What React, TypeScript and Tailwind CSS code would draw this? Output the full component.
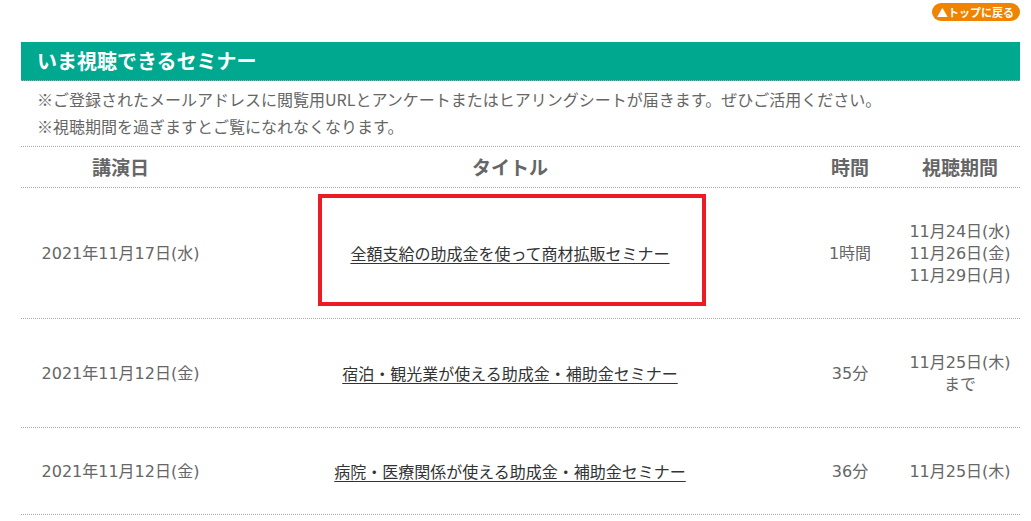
import React from "react";

const font = { fontFamily: '"Noto Sans CJK JP", "Noto Sans", sans-serif' };

type Row = {
  date: string;
  title: string;
  time: string;
  period: string[];
  boxed?: boolean;
};

const rows: Row[] = [
  {
    date: "2021年11月17日(水)",
    title: "全額支給の助成金を使って商材拡販セミナー",
    time: "1時間",
    period: ["11月24日(水)", "11月26日(金)", "11月29日(月)"],
    boxed: true,
  },
  {
    date: "2021年11月12日(金)",
    title: "宿泊・観光業が使える助成金・補助金セミナー",
    time: "35分",
    period: ["11月25日(木)", "まで"],
  },
  {
    date: "2021年11月12日(金)",
    title: "病院・医療関係が使える助成金・補助金セミナー",
    time: "36分",
    period: ["11月25日(木)"],
  },
];

export default function App() {
  return (
    <div className="w-[1031px] h-[521px] bg-white overflow-hidden" style={font}>
      <div className="flex justify-end pr-[11px] pt-[3px] h-[42px]">
        <div className="h-[18px] pl-[5px] pr-[6px] rounded-full bg-[#f08300] text-white text-[11px] font-bold leading-[18px]">
          ▲トップに戻る
        </div>
      </div>
      <div className="ml-[21px] w-[999px]">
        <div className="h-[39px] bg-[#00a88f] border-b border-dotted border-[#aaa] pl-[16px] flex items-center">
          <span className="text-white text-[20px] font-bold">いま視聴できるセミナー</span>
        </div>
        <div className="pl-[16px] pt-[5px] pb-[6px] text-[16px] leading-[27px] text-[#666] border-b border-dotted border-[#aaa]">
          <p>※ご登録されたメールアドレスに閲覧用URLとアンケートまたはヒアリングシートが届きます。ぜひご活用ください。</p>
          <p>※視聴期間を過ぎますとご覧になれなくなります。</p>
        </div>
        <div className="flex h-[41px] border-b border-dotted border-[#aaa] text-[19px] font-bold text-[#666] items-center">
          <div className="w-[199px] text-center">講演日</div>
          <div className="w-[580px] text-center">タイトル</div>
          <div className="w-[100px] text-center">時間</div>
          <div className="w-[120px] text-center">視聴期間</div>
        </div>
        {rows.map((r, i) => (
          <div
            key={i}
            className="flex items-center py-[32px] border-b border-dotted border-[#aaa] text-[16px] leading-[22px] text-[#666]"
          >
            <div className="w-[199px] text-center relative top-[1px] font-['DejaVu_Sans','Noto_Sans_CJK_JP',sans-serif]">{r.date}</div>
            <div className="w-[580px] text-center relative">
              <a href="#" className="underline text-[#333] underline-offset-[3px]">
                {r.title}
              </a>
              {r.boxed && (
                <div className="absolute left-[98px] top-[-48px] w-[388px] h-[112px] border-[4px] border-[#ed1c24]" />
              )}
            </div>
            <div className="w-[100px] text-center relative top-[1px] font-['DejaVu_Sans','Noto_Sans_CJK_JP',sans-serif]">{r.time}</div>
            <div className="w-[120px] text-center relative top-[1px] font-['DejaVu_Sans','Noto_Sans_CJK_JP',sans-serif]">
              {r.period.map((p, j) => (
                <div key={j}>{p}</div>
              ))}
            </div>
          </div>
        ))}
      </div>
    </div>
  );
}
